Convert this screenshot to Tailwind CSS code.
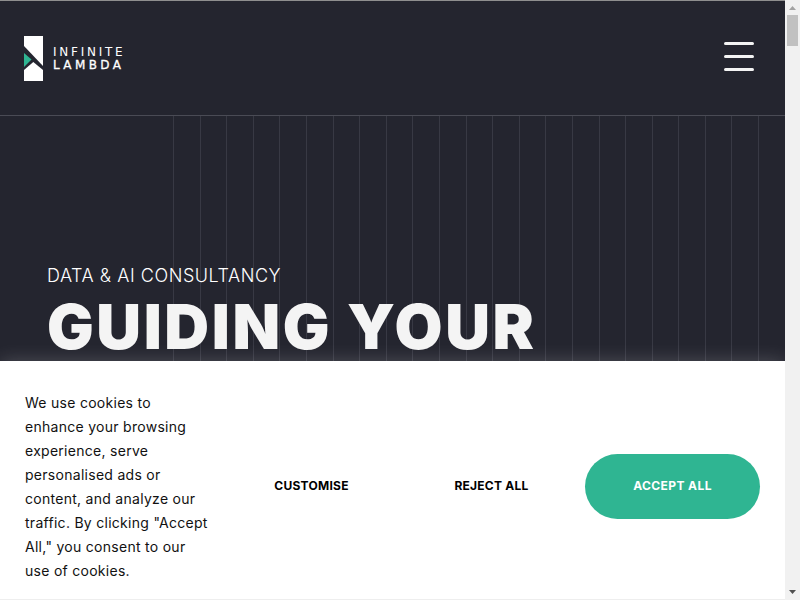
<!DOCTYPE html>
<html lang="en">
<head>
<meta charset="utf-8">
<title>Infinite Lambda</title>
<script src="https://cdn.jsdelivr.net/npm/@tailwindcss/browser@4"></script>
</head>
<body class="m-0 h-[600px] w-[800px] overflow-hidden bg-white font-['Inter','Liberation_Sans',sans-serif]">
<div class="flex h-[600px] w-[800px]">
  <main class="relative h-[600px] w-[785px] overflow-hidden bg-[#24252f]">
    <div class="h-px bg-[#8f8f8f]"></div>
    <header class="flex h-[115px] items-center justify-between border-b border-[#4a4b55] pl-[24px] pr-[31px]">
      <div class="flex items-center gap-[10px]">
        <svg width="19" height="45" viewBox="0 0 19 45" class="mt-px">
          <path d="M0 0H19V30L0 10Z" fill="#fff"/>
          <path d="M0 17L7.500 23.500L0 31Z" fill="#2fb592"/>
          <path d="M0 34L9.300 26L19 34V45H0Z" fill="#fff"/>
        </svg>
        <div class="mt-[2px] flex flex-col text-white font-['DejaVu_Sans',sans-serif] leading-[13px]">
          <span class="text-[12px] tracking-[2.75px]">INFINITE</span>
          <span class="text-[12px] tracking-[3.4px] [-webkit-text-stroke:0.3px_#ffffff]">LAMBDA</span>
        </div>
      </div>
      <button class="mb-[4px] flex w-[30px] flex-col gap-[10px]" aria-label="Menu">
        <span class="h-[3px] rounded-sm bg-[#f4f4f4]"></span>
        <span class="h-[3px] rounded-sm bg-[#f4f4f4]"></span>
        <span class="h-[3px] rounded-sm bg-[#f4f4f4]"></span>
      </button>
    </header>
    <div class="relative h-[484px]">
      <div class="absolute inset-y-0 left-[173px] flex">
        <i class="block h-full w-[26.6px] border-l border-[#383944]"></i>
        <i class="block h-full w-[26.6px] border-l border-[#383944]"></i>
        <i class="block h-full w-[26.6px] border-l border-[#383944]"></i>
        <i class="block h-full w-[26.6px] border-l border-[#383944]"></i>
        <i class="block h-full w-[26.6px] border-l border-[#383944]"></i>
        <i class="block h-full w-[26.6px] border-l border-[#383944]"></i>
        <i class="block h-full w-[26.6px] border-l border-[#383944]"></i>
        <i class="block h-full w-[26.6px] border-l border-[#383944]"></i>
        <i class="block h-full w-[26.6px] border-l border-[#383944]"></i>
        <i class="block h-full w-[26.6px] border-l border-[#383944]"></i>
        <i class="block h-full w-[26.6px] border-l border-[#383944]"></i>
        <i class="block h-full w-[26.6px] border-l border-[#383944]"></i>
        <i class="block h-full w-[26.6px] border-l border-[#383944]"></i>
        <i class="block h-full w-[26.6px] border-l border-[#383944]"></i>
        <i class="block h-full w-[26.6px] border-l border-[#383944]"></i>
        <i class="block h-full w-[26.6px] border-l border-[#383944]"></i>
        <i class="block h-full w-[26.6px] border-l border-[#383944]"></i>
        <i class="block h-full w-[26.6px] border-l border-[#383944]"></i>
        <i class="block h-full w-[26.6px] border-l border-[#383944]"></i>
        <i class="block h-full w-[26.6px] border-l border-[#383944]"></i>
        <i class="block h-full w-[26.6px] border-l border-[#383944]"></i>
        <i class="block h-full w-[26.6px] border-l border-[#383944]"></i>
        <i class="block h-full w-[26.6px] border-l border-[#383944]"></i>
      </div>
      <div class="relative pl-[47px] pt-[149px]">
        <p class="text-[18px] font-light leading-[22px] tracking-[0.55px] text-white">DATA &amp; AI CONSULTANCY</p>
        <h1 class="mt-[4px] text-[62px] font-black leading-[72px] tracking-[2.6px] text-[#f4f4f4]">GUIDING YOUR</h1>
      </div>
    </div>
    <section class="absolute bottom-0 left-0 flex h-[239px] w-full items-center border-b border-[#eeeeee] bg-white pl-[25px] pr-[25px] pt-[13px] shadow-[0_0_18px_rgba(255,255,255,0.2)]">
      <p class="w-[186px] shrink-0 text-[14px] leading-[24px] tracking-[0.28px] text-[#111111]">We use cookies to enhance your browsing experience, serve personalised ads or content, and analyze our traffic. By clicking "Accept All," you consent to our use of cookies.</p>
      <div class="ml-auto flex items-center">
        <button class="w-[180px] pb-[2px] text-center text-[12px] font-bold tracking-[0.25px] text-black">CUSTOMISE</button>
        <button class="mr-[3.500px] w-[180px] pb-[2px] text-center text-[12px] font-bold tracking-[0.25px] text-black">REJECT ALL</button>
        <button class="h-[65px] w-[175px] rounded-[33px] bg-[#2fb592] pb-[2px] text-center text-[12px] font-bold tracking-[0.4px] text-white">ACCEPT ALL</button>
      </div>
    </section>
  </main>
  <aside class="flex h-[600px] w-[15px] flex-col items-center bg-[#f1f1f1]">
    <svg width="15" height="15" viewBox="0 0 15 15"><path d="M4 10H11L7.500 6Z" fill="#a3a3a3"/></svg>
    <div class="h-[31px] w-[11px] bg-[#c1c1c1]"></div>
    <svg width="15" height="15" viewBox="0 0 15 15" class="mt-auto"><path d="M4 5H11L7.500 9Z" fill="#505050"/></svg>
  </aside>
</div>
</body>
</html>
